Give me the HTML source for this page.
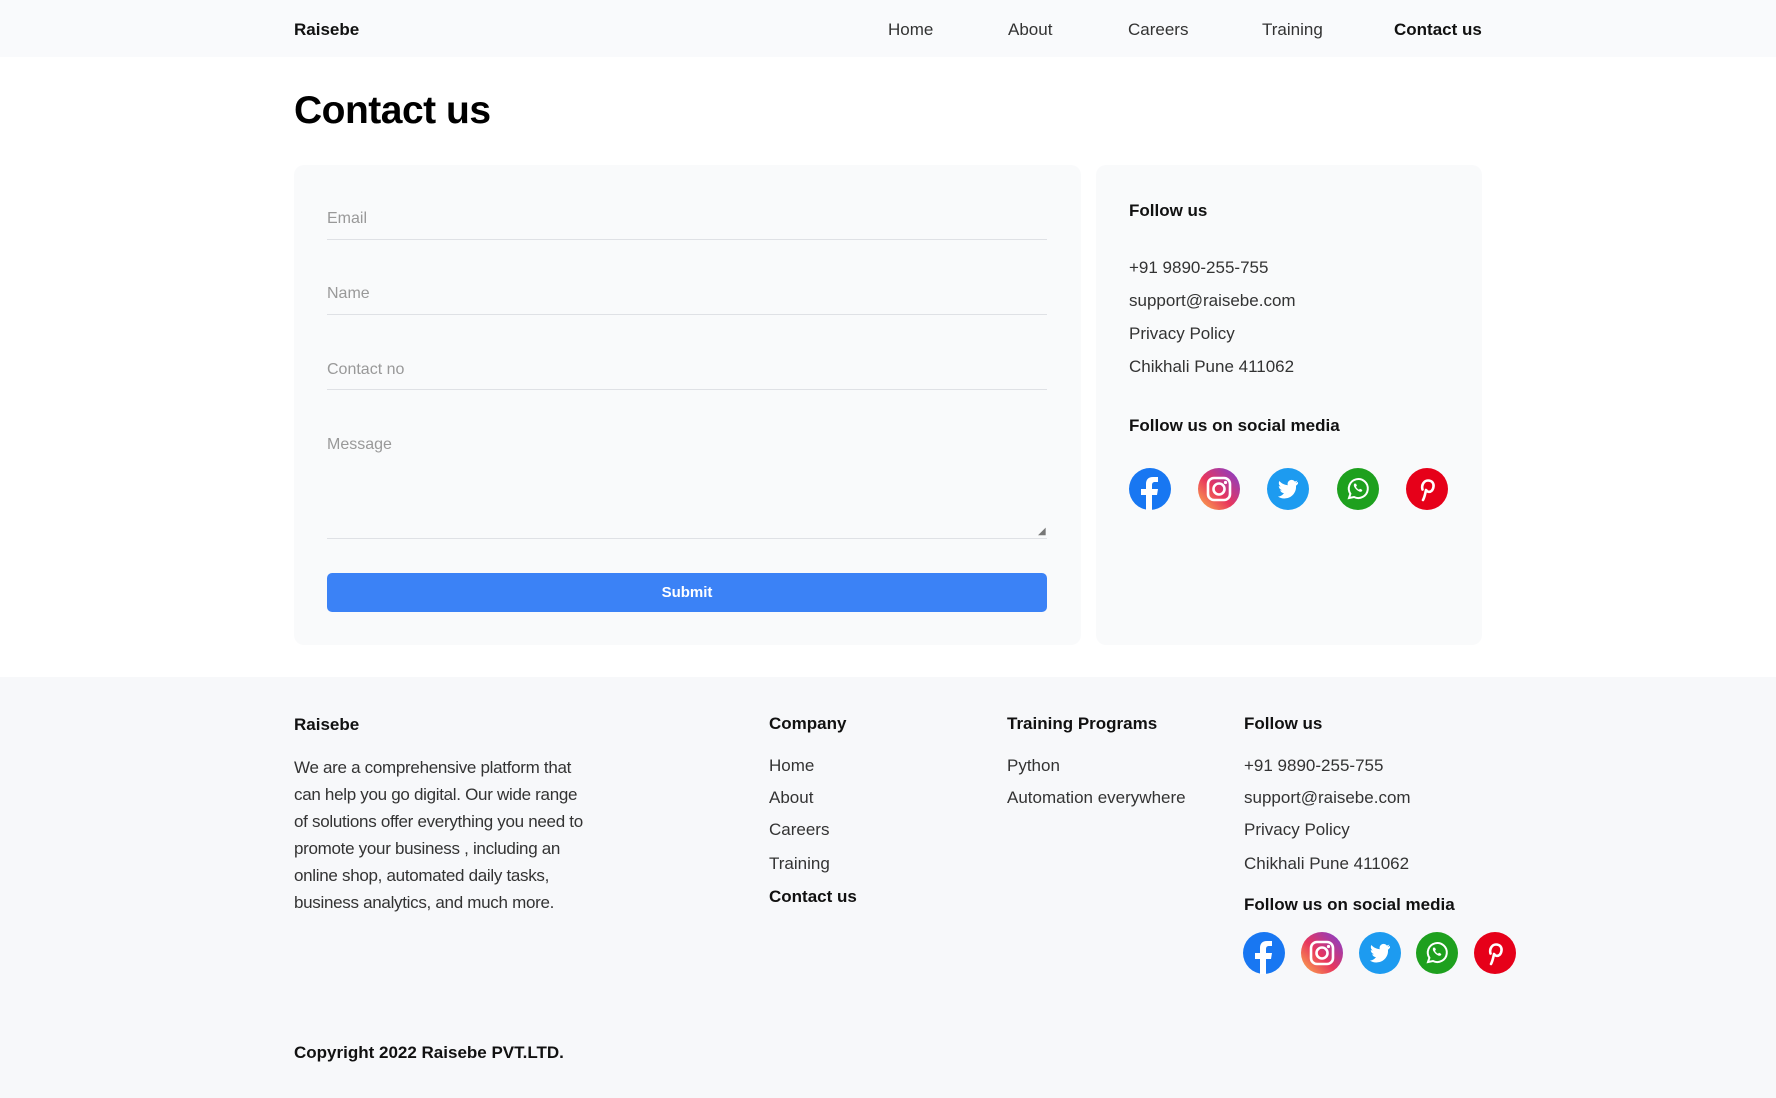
<!DOCTYPE html>
<html><head><meta charset="utf-8"><style>
*{margin:0;padding:0;box-sizing:border-box}
body{width:1776px;height:1098px;background:#fff;font-family:"Liberation Sans",sans-serif;color:#222;position:relative;overflow:hidden}
.a{position:absolute;white-space:nowrap}
.nav{position:absolute;left:0;top:0;width:1776px;height:57px;background:#f9fafc}
.n{font-size:17px;color:#333;top:19px}
.b{font-weight:bold;color:#111}
.card{position:absolute;top:165px;height:480px;background:#f9fafb;border-radius:10px}
.ph{font-size:16px;color:#999;left:327px}
.ln{position:absolute;left:327px;width:720px;height:1px;background:#dfe1e5}
.t{font-size:17px;color:#333}
.ic{position:absolute;width:42px;height:42px;border-radius:50%}
.ic svg{width:42px;height:42px;display:block}
.foot{position:absolute;left:0;top:677px;width:1776px;height:421px;background:#f7f8fa}
</style></head><body>
<div class="nav"></div>
<div class="a b" style="left:294px;top:20px;font-size:17px">Raisebe</div>
<div class="a n" style="left:888px;top:20px">Home</div>
<div class="a n" style="left:1008px;top:20px">About</div>
<div class="a n" style="left:1128px;top:20px">Careers</div>
<div class="a n" style="left:1262px;top:20px">Training</div>
<div class="a n b" style="left:1394px;top:20px">Contact us</div>
<div class="a b" style="left:294px;top:89px;font-size:39px;color:#000;letter-spacing:-0.5px">Contact us</div>

<div class="card" style="left:294px;width:787px"></div>
<div class="card" style="left:1096px;width:386px"></div>
<div class="a ph" style="top:210px">Email</div><div class="ln" style="top:239px"></div>
<div class="a ph" style="top:285px">Name</div><div class="ln" style="top:314px"></div>
<div class="a ph" style="top:361px">Contact no</div><div class="ln" style="top:389px"></div>
<div class="a ph" style="top:436px">Message</div><div class="ln" style="top:538px"></div>
<div class="a" style="left:1038px;top:526px;font-size:10px;color:#777">◢</div>
<div class="a" style="left:327px;top:573px;width:720px;height:39px;background:#3b82f6;border-radius:5px;color:#fff;font-weight:bold;font-size:15px;text-align:center;line-height:39px">Submit</div>

<div class="a b t" style="left:1129px;top:201px;color:#111">Follow us</div>
<div class="a t" style="left:1129px;top:258px">+91 9890-255-755</div>
<div class="a t" style="left:1129px;top:291px">support@raisebe.com</div>
<div class="a t" style="left:1129px;top:324px">Privacy Policy</div>
<div class="a t" style="left:1129px;top:357px">Chikhali Pune 411062</div>
<div class="a b t" style="left:1129px;top:416px;color:#111">Follow us on social media</div>

<div class="foot"></div>
<div class="a b t" style="left:294px;top:715px;color:#111">Raisebe</div>
<div class="a t" style="left:294px;top:754px;white-space:normal;width:292px;line-height:27px;letter-spacing:-0.3px">We are a comprehensive platform that can help you go digital. Our wide range of solutions offer everything you need to promote your business , including an online shop, automated daily tasks, business analytics, and much more.</div>
<div class="a b t" style="left:769px;top:714px;color:#111">Company</div>
<div class="a t" style="left:769px;top:756px">Home</div>
<div class="a t" style="left:769px;top:788px">About</div>
<div class="a t" style="left:769px;top:820px">Careers</div>
<div class="a t" style="left:769px;top:854px">Training</div>
<div class="a b t" style="left:769px;top:887px;color:#111">Contact us</div>
<div class="a b t" style="left:1007px;top:714px;color:#111">Training Programs</div>
<div class="a t" style="left:1007px;top:756px">Python</div>
<div class="a t" style="left:1007px;top:788px">Automation everywhere</div>
<div class="a b t" style="left:1244px;top:714px;color:#111">Follow us</div>
<div class="a t" style="left:1244px;top:756px">+91 9890-255-755</div>
<div class="a t" style="left:1244px;top:788px">support@raisebe.com</div>
<div class="a t" style="left:1244px;top:820px">Privacy Policy</div>
<div class="a t" style="left:1244px;top:854px">Chikhali Pune 411062</div>
<div class="a b t" style="left:1244px;top:895px;color:#111">Follow us on social media</div>
<div class="a b t" style="left:294px;top:1043px;color:#111">Copyright 2022 Raisebe PVT.LTD.</div>

<svg width="0" height="0" style="position:absolute"><defs>
<linearGradient id="ig" x1="0" y1="1" x2="1" y2="0"><stop offset="0" stop-color="#fdb44b"/><stop offset=".45" stop-color="#e8365d"/><stop offset="1" stop-color="#7b3fd6"/></linearGradient>
<symbol id="fb" viewBox="0 0 42 42"><circle cx="21" cy="21" r="21" fill="#1877f2"/><path d="M23 42V27h5l1-6h-6v-4c0-2 1-3 3-3h3V9h-5c-5 0-7 3-7 7v5h-5v6h5v15z" fill="#fff"/></symbol>
<symbol id="in" viewBox="0 0 42 42"><circle cx="21" cy="21" r="21" fill="url(#ig)"/><rect x="10" y="10" width="22" height="22" rx="6" fill="none" stroke="#fff" stroke-width="2.6"/><circle cx="21" cy="21" r="5.5" fill="none" stroke="#fff" stroke-width="2.6"/><circle cx="27.5" cy="14.5" r="1.6" fill="#fff"/></symbol>
<symbol id="tw" viewBox="0 0 42 42"><circle cx="21" cy="21" r="21" fill="#1d9bf0"/><path d="M31 14c-1 .4-1.6.6-2.4.7.9-.5 1.5-1.3 1.8-2.2-.8.5-1.7.8-2.6 1a4 4 0 0 0-7 3.7c-3.4-.2-6.4-1.8-8.4-4.2-1.1 1.9-.5 4.3 1.3 5.5-.7 0-1.300-.2-1.9-.5 0 2 1.4 3.7 3.3 4.1-.6.2-1.2.2-1.9.1.5 1.6 2 2.8 3.8 2.8A8.2 8.2 0 0 1 11 28.6 11.6 11.6 0 0 0 29 18.2V17.7c.8-.6 1.5-1.3 2-2.1z" fill="#fff"/></symbol>
<symbol id="wa" viewBox="0 0 42 42"><circle cx="21" cy="21" r="21" fill="#1ea01e"/><path d="M12 30l1.4-4.2A9.5 9.5 0 1 1 17 29z" fill="none" stroke="#fff" stroke-width="2"/><path d="M17.5 15.5c-.8.8-1 2 0 3.8 1.2 2 3 3.6 5 4.3 1.3.4 2.3 0 2.8-1l-.3-.8-2-1-1 1c-1.2-.5-2.4-1.7-3-3l.9-1-.8-2.1z" fill="#fff"/></symbol>
<symbol id="pi" viewBox="0 0 42 42"><circle cx="21" cy="21" r="21" fill="#e60019"/><path d="M20 22c-.8 4-1.3 7-3 10M16.5 21.5c-1.3-4.5 1.5-9 5.5-9s6 2.7 5.5 6.2c-.5 3.6-2.8 5.6-5.2 5-1.3-.3-1.8-1.2-1.8-1.2" fill="none" stroke="#fff" stroke-width="2.6" stroke-linecap="round"/></symbol>
</defs></svg>
<div class="ic" style="left:1129px;top:468px"><svg><use href="#fb"/></svg></div>
<div class="ic" style="left:1198px;top:468px"><svg><use href="#in"/></svg></div>
<div class="ic" style="left:1267px;top:468px"><svg><use href="#tw"/></svg></div>
<div class="ic" style="left:1337px;top:468px"><svg><use href="#wa"/></svg></div>
<div class="ic" style="left:1406px;top:468px"><svg><use href="#pi"/></svg></div>
<div class="ic" style="left:1243px;top:932px"><svg><use href="#fb"/></svg></div>
<div class="ic" style="left:1301px;top:932px"><svg><use href="#in"/></svg></div>
<div class="ic" style="left:1359px;top:932px"><svg><use href="#tw"/></svg></div>
<div class="ic" style="left:1416px;top:932px"><svg><use href="#wa"/></svg></div>
<div class="ic" style="left:1474px;top:932px"><svg><use href="#pi"/></svg></div>
</body></html>
